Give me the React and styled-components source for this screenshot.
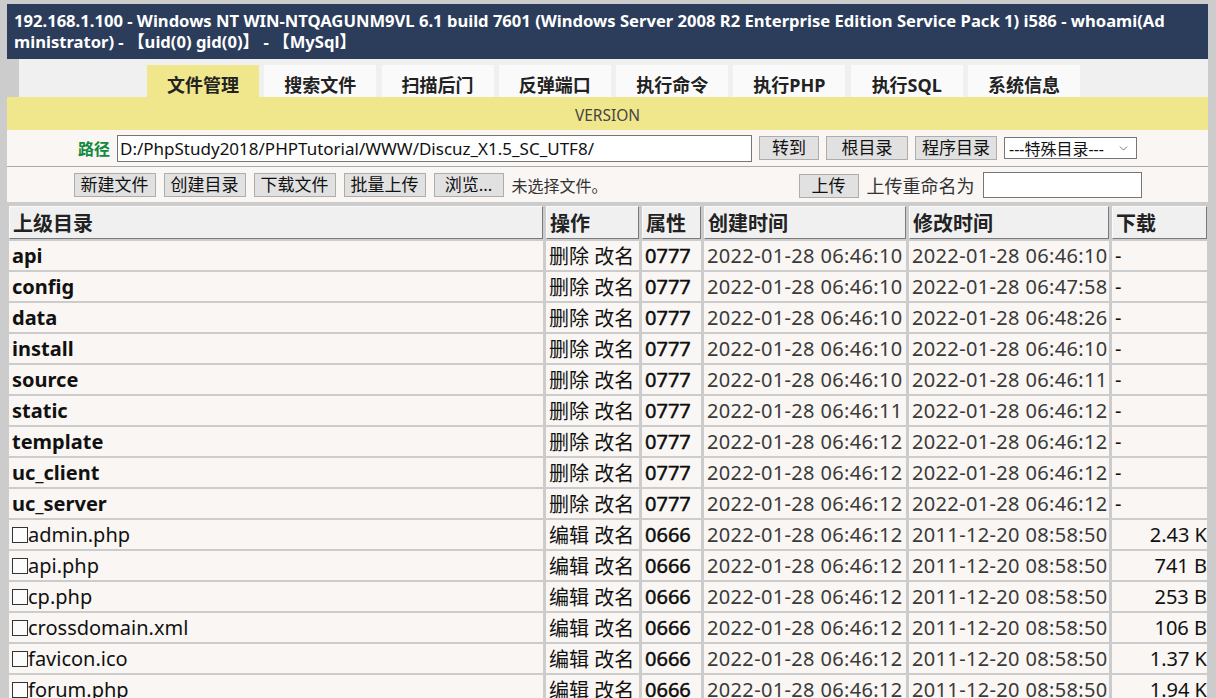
import styled, { createGlobalStyle } from "styled-components";
import { ChevronDown } from "lucide-react";

const GlobalStyle = createGlobalStyle`
  html, body {
    margin: 0;
    padding: 0;
    background: #cccccc;
  }
  body {
    font-family: "Noto Sans", "Noto Sans CJK SC", sans-serif;
    color: #111;
  }
`;

const FONT = `"Noto Sans", "Noto Sans CJK SC", sans-serif`;

const Page = styled.div`
  margin: 4px 8px 0 7px;
  background: #f9f6f3;
`;

const Header = styled.div`
  background: #2b3d5b;
  color: #fff;
  font: bold 16.6px/21px ${FONT};
  padding: 6px 7px 7px;
`;

const HeaderLine = styled.div`
  white-space: nowrap;
  overflow: hidden;
`;

const TabBar = styled.div`
  display: flex;
  justify-content: center;
  gap: 5.3px;
  height: 38px;
  box-sizing: border-box;
  padding-top: 6px;
  background: #f0f0f0;
  border-left: 12px solid #cccccc;
`;

const Tab = styled.div`
  width: 112px;
  height: 32px;
  box-sizing: border-box;
  padding-top: 8px;
  text-align: center;
  font: bold 18px/24px ${FONT};
  color: #222;
  background: ${({ $active }) => ($active ? "#f0e68c" : "#fafafa")};
`;

const Version = styled.div`
  height: 33px;
  box-sizing: border-box;
  padding-top: 3px;
  display: flex;
  align-items: center;
  justify-content: center;
  background: #f0e68c;
  font: 15.5px ${FONT};
  color: #444;
`;

const PathRow = styled.div`
  display: flex;
  align-items: center;
  justify-content: center;
  gap: 7px;
  height: 36px;
  border-bottom: 1px solid #aaaaaa;
`;

const ToolRow = styled.div`
  display: flex;
  align-items: center;
  justify-content: center;
  gap: 8px;
  height: 35px;
`;

const Label = styled.span`
  font: bold 16px ${FONT};
  color: #118a3c;
`;

const TextInput = styled.input`
  box-sizing: border-box;
  width: ${({ $w }) => $w}px;
  height: ${({ $h }) => $h || 26}px;
  border: 1px solid #767676;
  background: #fff;
  padding: 0 2px;
  font: 17px ${FONT};
  color: #111;
  outline: none;
`;

const Button = styled.button`
  box-sizing: border-box;
  width: ${({ $w }) => $w || 82}px;
  height: 24px;
  padding: 0;
  border: 1px solid #adadad;
  border-radius: 0;
  background: #e1e1e1;
  font: 17px/22px ${FONT};
  color: #111;
  margin-top: ${({ $down }) => ($down ? 3 : 0)}px;
`;

const Select = styled.div`
  box-sizing: border-box;
  width: 133px;
  height: 22px;
  display: flex;
  align-items: center;
  justify-content: space-between;
  padding: 0 6px 0 4px;
  border: 1px solid #767676;
  background: #fff;
  font: 16px ${FONT};
  color: #111;
`;

const FileGroup = styled.div`
  width: 357px;
  display: flex;
  align-items: center;
  gap: 8px;
`;

const Note = styled.span`
  font: ${({ $size }) => $size || 16}px ${FONT};
  color: #333;
`;

const Grid = styled.div`
  display: grid;
  grid-template-columns: 534px 93px 59px 202px 200px 95px;
  column-gap: 3px;
  row-gap: 2px;
  padding: 4px 1px 0 2px;
  background: #cccccc;
`;

const HeadCell = styled.div`
  box-sizing: border-box;
  height: 33px;
  padding: 0 3px;
  display: flex;
  align-items: center;
  background: #f0f0f0;
  border-top: 1px solid #fbfbfb;
  border-left: 1px solid #fbfbfb;
  border-right: 1px solid #7a7a7a;
  border-bottom: 1px solid #7a7a7a;
  font: bold 20px ${FONT};
  color: #222;
`;

const Cell = styled.div`
  height: 29px;
  padding: 0 3px;
  display: flex;
  align-items: center;
  justify-content: ${({ $right }) => ($right ? "flex-end" : "flex-start")};
  padding-right: ${({ $right }) => ($right ? 0 : 3)}px;
  background: #f9f6f3;
  font-family: ${FONT};
  font-size: 20px;
  font-weight: ${({ $bold }) => ($bold ? 700 : 400)};
  letter-spacing: ${({ $muted }) => ($muted ? "0.35px" : "0")};
  color: ${({ $muted }) => ($muted ? "#3a3a3a" : "#111")};
  -webkit-text-stroke: ${({ $heavy }) => ($heavy ? "0.45px #000" : "0")};
  white-space: nowrap;
  overflow: hidden;
`;

const Check = styled.span`
  display: inline-block;
  width: 14px;
  height: 14px;
  border: 1px solid #333;
  background: #fcfcfc;
  flex-shrink: 0;
`;

const tabs = ["文件管理", "搜索文件", "扫描后门", "反弹端口", "执行命令", "执行PHP", "执行SQL", "系统信息"];

const dirs = [
  ["api", "06:46:10", "06:46:10"],
  ["config", "06:46:10", "06:47:58"],
  ["data", "06:46:10", "06:48:26"],
  ["install", "06:46:10", "06:46:10"],
  ["source", "06:46:10", "06:46:11"],
  ["static", "06:46:11", "06:46:12"],
  ["template", "06:46:12", "06:46:12"],
  ["uc_client", "06:46:12", "06:46:12"],
  ["uc_server", "06:46:12", "06:46:12"],
];

const files = [
  ["admin.php", "2.43 K"],
  ["api.php", "741 B"],
  ["cp.php", "253 B"],
  ["crossdomain.xml", "106 B"],
  ["favicon.ico", "1.37 K"],
  ["forum.php", "1.94 K"],
];

function Row({ name, bold, check, ops, mode, created, modified, size, right }) {
  return (
    <>
      <Cell $bold={bold}>
        {check && <Check />}
        {name}
      </Cell>
      <Cell>{ops}</Cell>
      <Cell $heavy>{mode}</Cell>
      <Cell $muted>{created}</Cell>
      <Cell $muted>{modified}</Cell>
      <Cell $right={right}>{size}</Cell>
    </>
  );
}

export default function App() {
  return (
    <>
      <GlobalStyle />
      <Page>
        <Header>
          <HeaderLine>
            192.168.1.100 - Windows NT WIN-NTQAGUNM9VL 6.1 build 7601 (Windows Server 2008 R2 Enterprise Edition
            Service Pack 1) i586 - whoami(Ad
          </HeaderLine>
          <HeaderLine>ministrator) - 【uid(0) gid(0)】 - 【MySql】</HeaderLine>
        </Header>
        <TabBar>
          {tabs.map((t, i) => (
            <Tab key={t} $active={i === 0}>
              {t}
            </Tab>
          ))}
        </TabBar>
        <Version>VERSION</Version>
        <PathRow>
          <Label>路径</Label>
          <TextInput $w={635} $h={27} defaultValue="D:/PhpStudy2018/PHPTutorial/WWW/Discuz_X1.5_SC_UTF8/" />
          <Button $w={60}>转到</Button>
          <Button>根目录</Button>
          <Button>程序目录</Button>
          <Select>
            <span>---特殊目录---</span>
            <ChevronDown size={13} strokeWidth={1.3} color="#444" />
          </Select>
        </PathRow>
        <ToolRow>
          <Button>新建文件</Button>
          <Button>创建目录</Button>
          <Button>下载文件</Button>
          <Button>批量上传</Button>
          <FileGroup>
            <Button $w={70}>浏览...</Button>
            <Note>未选择文件。</Note>
          </FileGroup>
          <Button $w={60} $down>
            上传
          </Button>
          <Note $size={18}>上传重命名为</Note>
          <TextInput $w={159} />
        </ToolRow>
        <Grid>
          <HeadCell>上级目录</HeadCell>
          <HeadCell>操作</HeadCell>
          <HeadCell>属性</HeadCell>
          <HeadCell>创建时间</HeadCell>
          <HeadCell>修改时间</HeadCell>
          <HeadCell>下载</HeadCell>
          {dirs.map(([name, c, m]) => (
            <Row
              key={name}
              name={name}
              bold
              ops="删除 改名"
              mode="0777"
              created={`2022-01-28 ${c}`}
              modified={`2022-01-28 ${m}`}
              size="-"
            />
          ))}
          {files.map(([name, size]) => (
            <Row
              key={name}
              name={name}
              check
              ops="编辑 改名"
              mode="0666"
              created="2022-01-28 06:46:12"
              modified="2011-12-20 08:58:50"
              size={size}
              right
            />
          ))}
        </Grid>
      </Page>
    </>
  );
}
